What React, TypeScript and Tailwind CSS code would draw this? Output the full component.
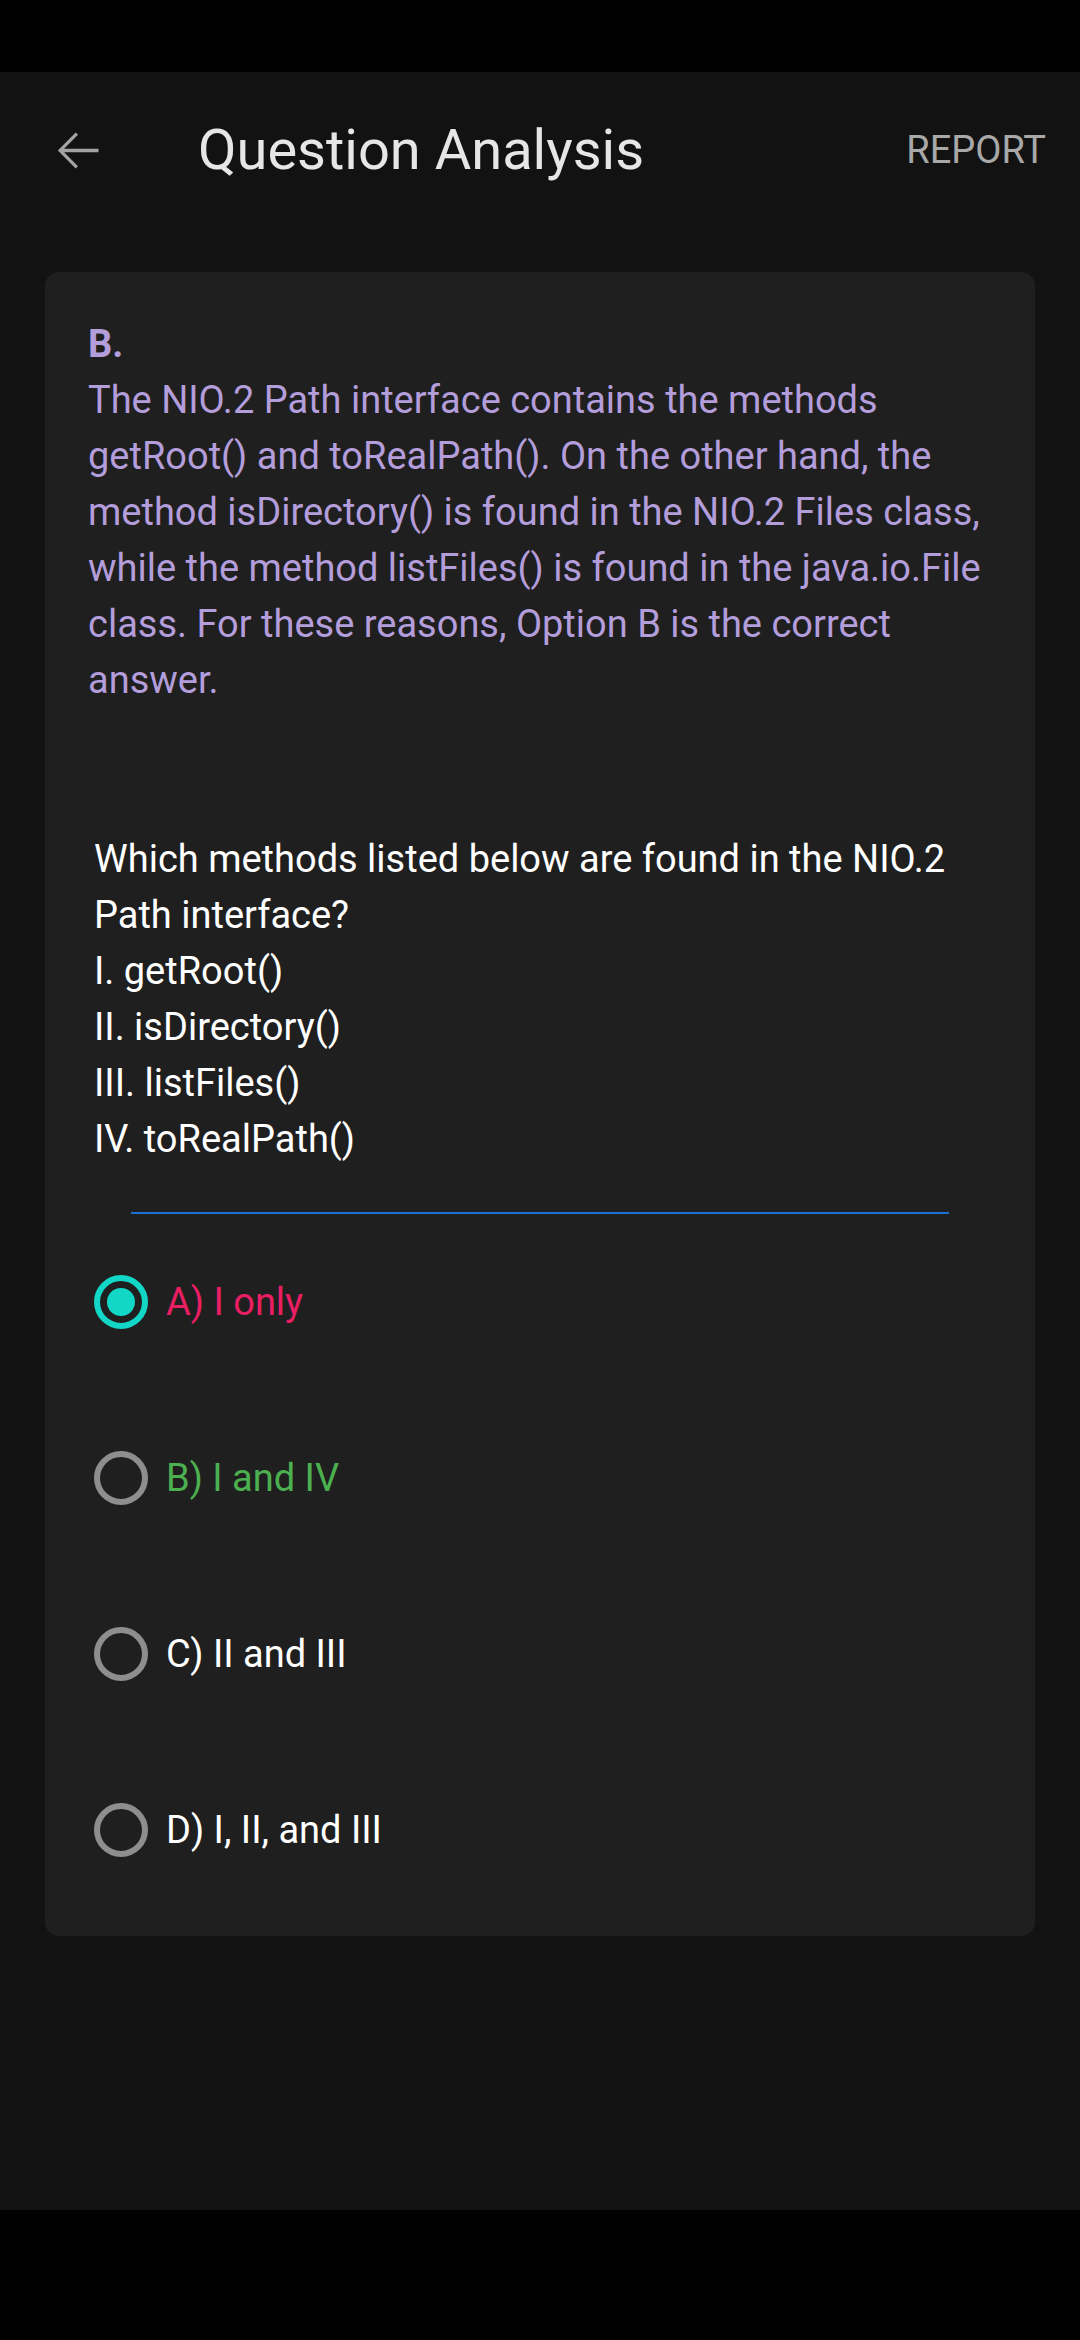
export default function App() {
  const options = [
    { label: "A) I only", color: "text-[#e91e63]", selected: true },
    { label: "B) I and IV", color: "text-[#4caf50]", selected: false },
    { label: "C) II and III", color: "text-white", selected: false },
    { label: "D) I, II, and III", color: "text-white", selected: false },
  ];

  return (
    <div className="flex h-[2340px] w-[1080px] flex-col bg-black font-['Roboto',sans-serif]">
      {/* status bar */}
      <div className="h-[72px] shrink-0 bg-black" />

      <div className="flex h-[2138px] shrink-0 flex-col bg-[#121212]">
        {/* app bar */}
        <div className="flex h-[156px] shrink-0 items-center pl-[46px] pr-[34px]">
          <svg viewBox="0 0 24 24" className="h-[63px] w-[63px] fill-[#a3a3a3]">
            <path d="M20 11.3H6.9l5.3-5.3-.9-.9L4.5 12l6.8 6.9.9-.9-5.3-5.3H20z" />
          </svg>
          <h1 className="ml-[89px] text-[56px] leading-none text-[#e6e6e6]">Question Analysis</h1>
          <span className="ml-auto text-[38px] leading-none text-[#a8a8a8]">REPORT</span>
        </div>

        {/* card */}
        <div className="mx-[45px] mt-[44px] rounded-[14px] bg-[#1f1f1f] pt-[44px] pb-[18px]">
          <div className="px-[43px] text-[38px] leading-[56px] text-[#b39ddb]">
            <p className="font-bold">B.</p>
            <p>
              The NIO.2 Path interface contains the methods getRoot() and toRealPath(). On the other
              hand, the method isDirectory() is found in the NIO.2 Files class, while the method
              listFiles() is found in the java.io.File class. For these reasons, Option B is the
              correct answer.
            </p>
          </div>

          <div className="mt-[123px] pl-[49px] pr-[43px] text-[38px] leading-[56px] text-white">
            <p>Which methods listed below are found in the NIO.2 Path interface?</p>
            <p>I. getRoot()</p>
            <p>II. isDirectory()</p>
            <p>III. listFiles()</p>
            <p>IV. toRealPath()</p>
          </div>

          <div className="mx-[86px] mt-[45px] h-[2px] bg-[#1d6fd4]" />

          <div className="flex flex-col">
            {options.map((o) => (
              <div key={o.label} className="flex h-[176px] items-center pl-[49px]">
                {o.selected ? (
                  <div className="flex h-[54px] w-[54px] items-center justify-center rounded-full border-[6px] border-[#12d6c6]">
                    <div className="h-[28px] w-[28px] rounded-full bg-[#12d6c6]" />
                  </div>
                ) : (
                  <div className="h-[54px] w-[54px] rounded-full border-[6px] border-[#8e8e8e]" />
                )}
                <span className={`ml-[18px] text-[38px] leading-none ${o.color}`}>{o.label}</span>
              </div>
            ))}
          </div>
        </div>
      </div>

      <div className="flex-1 bg-black" />
    </div>
  );
}
